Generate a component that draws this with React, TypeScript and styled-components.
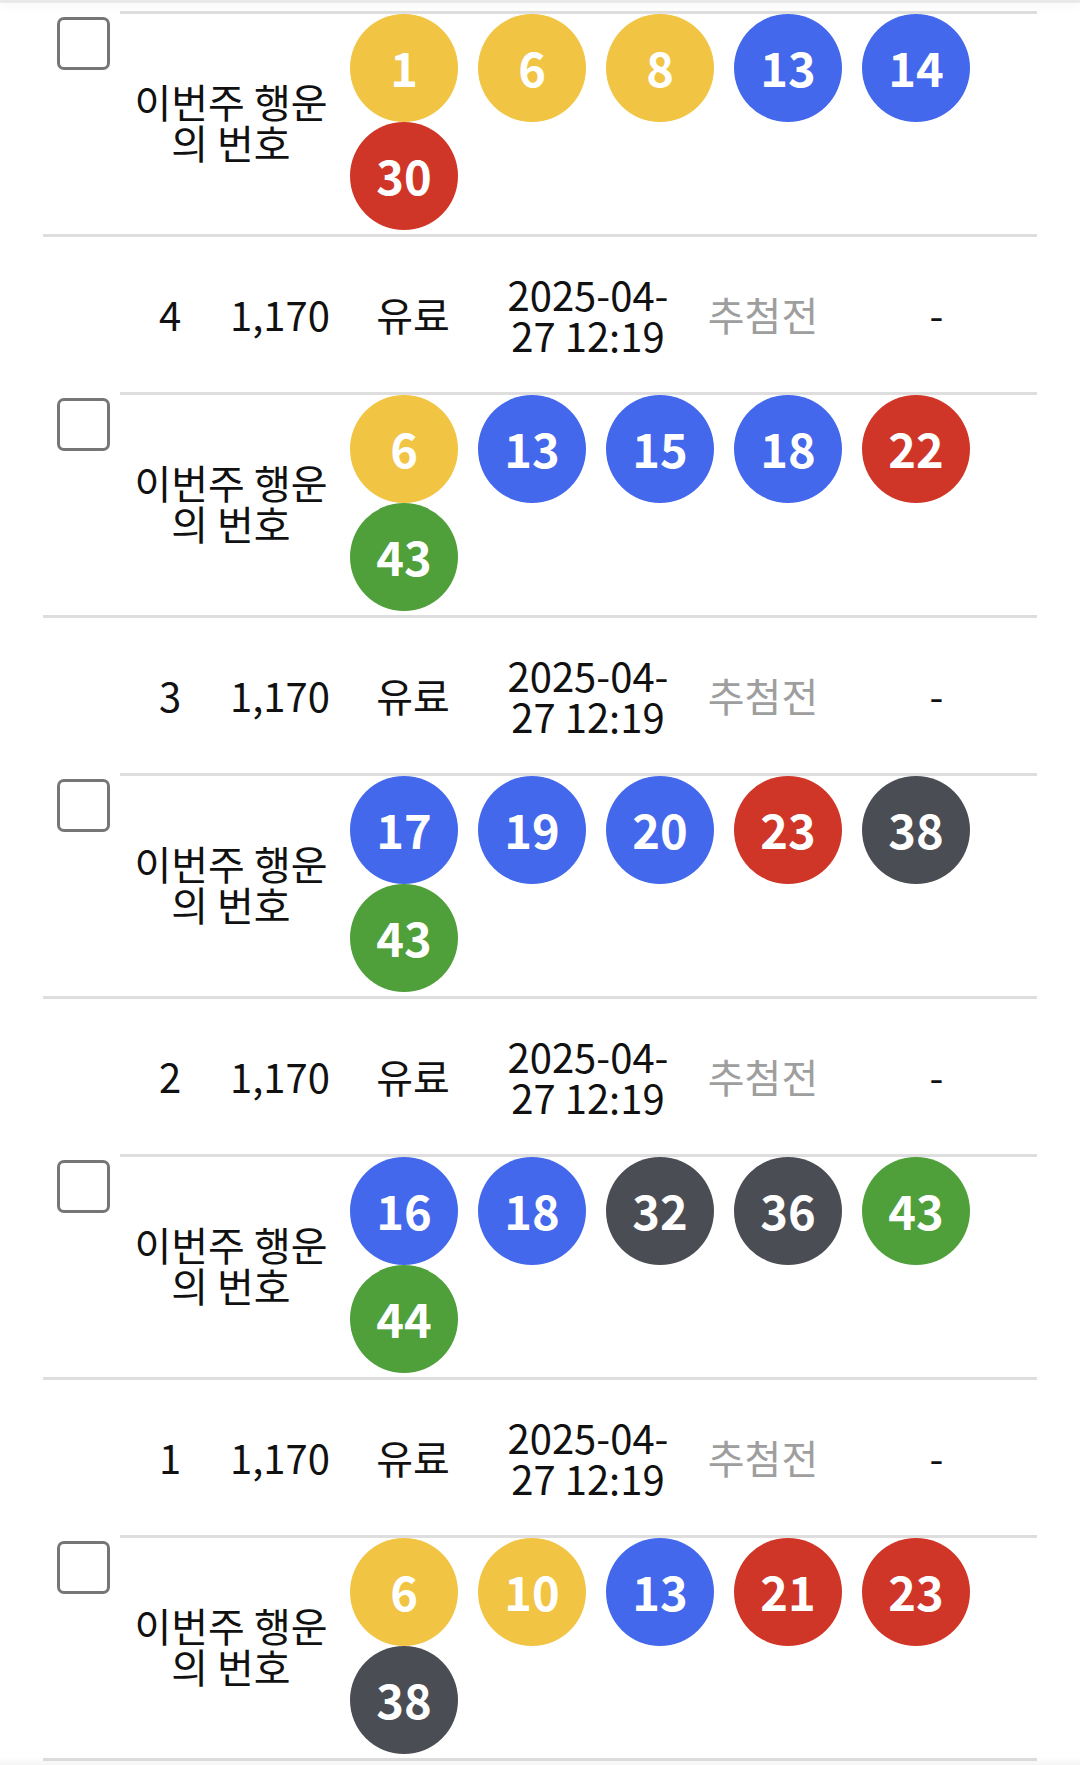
import styled, { createGlobalStyle } from "styled-components";

const GlobalStyle = createGlobalStyle`
  html, body {
    margin: 0;
    padding: 0;
    background: #fff;
  }
  body {
    font-family: "Noto Sans CJK KR", "Noto Sans", sans-serif;
    color: #111;
  }
`;

const LINE = "#dedede";

const BALL_COLORS = {
  yellow: "#f1c443",
  blue: "#4368ec",
  red: "#d03628",
  gray: "#4b4d54",
  green: "#4fa03a",
};

const ballColor = (n: number) => {
  if (n <= 10) return BALL_COLORS.yellow;
  if (n <= 20) return BALL_COLORS.blue;
  if (n <= 30) return BALL_COLORS.red;
  if (n <= 40) return BALL_COLORS.gray;
  return BALL_COLORS.green;
};

type Ticket = {
  no: number;
  price: string;
  kind: string;
  date: string;
  status: string;
  result: string;
  numbers: number[];
  showInfo: boolean;
};

const tickets: Ticket[] = [
  { no: 5, price: "1,170", kind: "유료", date: "2025-04-27 12:19", status: "추첨전", result: "-", numbers: [1, 6, 8, 13, 14, 30], showInfo: false },
  { no: 4, price: "1,170", kind: "유료", date: "2025-04-27 12:19", status: "추첨전", result: "-", numbers: [6, 13, 15, 18, 22, 43], showInfo: true },
  { no: 3, price: "1,170", kind: "유료", date: "2025-04-27 12:19", status: "추첨전", result: "-", numbers: [17, 19, 20, 23, 38, 43], showInfo: true },
  { no: 2, price: "1,170", kind: "유료", date: "2025-04-27 12:19", status: "추첨전", result: "-", numbers: [16, 18, 32, 36, 43, 44], showInfo: true },
  { no: 1, price: "1,170", kind: "유료", date: "2025-04-27 12:19", status: "추첨전", result: "-", numbers: [6, 10, 13, 21, 23, 38], showInfo: true },
];

const Page = styled.div`
  width: 1080px;
  min-height: 1765px;
  padding: 11px 43px 0;
  box-sizing: border-box;
  background: #fff;
`;

// header shadow peeking in from above
const TopShade = styled.div`
  position: fixed;
  top: 0;
  left: 0;
  right: 0;
  height: 3px;
  background: #e9e9e9;
  box-shadow: 0 2px 9px rgba(0, 0, 0, 0.07);
  z-index: 2;
`;

const BottomShade = styled.div`
  position: fixed;
  bottom: 0;
  left: 0;
  right: 0;
  height: 8px;
  background: linear-gradient(to bottom, rgba(0, 0, 0, 0), rgba(0, 0, 0, 0.04));
  z-index: 2;
`;

const List = styled.div`
  display: flex;
  flex-direction: column;
  border-bottom: 3px solid ${LINE};
`;

const InfoRow = styled.div`
  display: grid;
  grid-template-columns: 77px 100px 120px 146px 204px 146px 1fr;
  align-items: center;
  height: 158px;
  box-sizing: border-box;
  border-top: 3px solid ${LINE};
  font-size: 40px;
  line-height: 41px;
`;

const Cell = styled.div<{ $muted?: boolean }>`
  text-align: center;
  padding: 0 10px;
  color: ${(p) => (p.$muted ? "#9e9e9e" : "#111")};
`;

const BallRow = styled.div`
  display: grid;
  grid-template-columns: 77px 1fr;
`;

const CheckCell = styled.div`
  padding: 6px 0 0 14px;
`;

const Check = styled.input.attrs({ type: "checkbox" })`
  appearance: none;
  display: block;
  margin: 0;
  width: 53px;
  height: 53px;
  box-sizing: border-box;
  border: 3px solid #767676;
  border-radius: 7px;
  background: #fff;
`;

const NumbersPanel = styled.div`
  display: grid;
  grid-template-columns: 220px 1fr;
  border-top: 3px solid ${LINE};
  padding: 0 0 4px;
`;

const Label = styled.div`
  align-self: center;
  text-align: center;
  font-size: 40px;
  line-height: 41px;
  padding: 0 2px 0 4px;
`;

const Balls = styled.div`
  display: flex;
  flex-wrap: wrap;
`;

const Ball = styled.span<{ $color: string }>`
  display: flex;
  align-items: center;
  justify-content: center;
  width: 108px;
  height: 108px;
  box-sizing: border-box;
  padding-bottom: 4px;
  margin: 0 10px;
  border-radius: 50%;
  background: ${(p) => p.$color};
  color: #fff;
  font-size: 47px;
  font-weight: 700;
  line-height: 1;
`;

const App = () => {
  return (
    <>
      <GlobalStyle />
      <TopShade />
      <Page>
        <List>
          {tickets.map((t) => (
            <div key={t.no}>
              {t.showInfo && (
                <InfoRow>
                  <Cell />
                  <Cell>{t.no}</Cell>
                  <Cell>{t.price}</Cell>
                  <Cell>{t.kind}</Cell>
                  <Cell>
                    {t.date.slice(0, 8)}
                    <wbr />
                    {t.date.slice(8)}
                  </Cell>
                  <Cell $muted>{t.status}</Cell>
                  <Cell>{t.result}</Cell>
                </InfoRow>
              )}
              <BallRow>
                <CheckCell>
                  <Check />
                </CheckCell>
                <NumbersPanel>
                  <Label>이번주 행운의 번호</Label>
                  <Balls>
                    {t.numbers.map((n) => (
                      <Ball key={n} $color={ballColor(n)}>
                        {n}
                      </Ball>
                    ))}
                  </Balls>
                </NumbersPanel>
              </BallRow>
            </div>
          ))}
        </List>
      </Page>
      <BottomShade />
    </>
  );
};

export default App;
